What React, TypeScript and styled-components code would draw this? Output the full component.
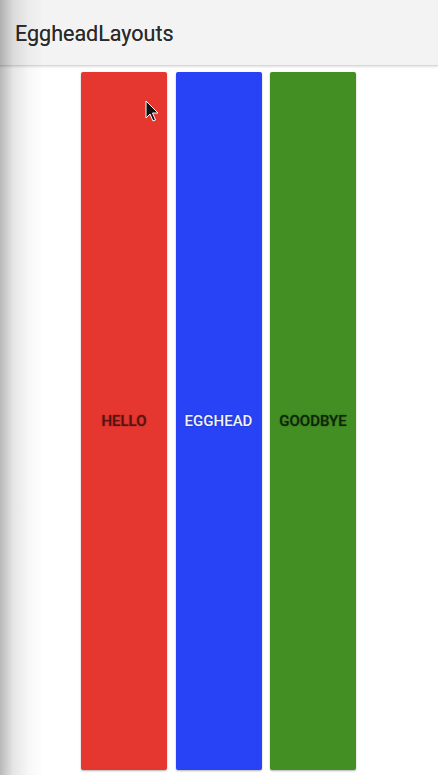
import React from "react";
import styled, { createGlobalStyle } from "styled-components";

const GlobalStyle = createGlobalStyle`
  html, body {
    margin: 0;
    padding: 0;
    background: #ffffff;
  }
  body {
    font-family: Roboto, "Liberation Sans", sans-serif;
  }
`;

const Screen = styled.div`
  position: relative;
  width: 438px;
  height: 775px;
  overflow: hidden;
  display: flex;
  flex-direction: column;
  background: #ffffff;
`;

const EdgeShade = styled.div`
  position: absolute;
  top: 0;
  left: 0;
  bottom: 0;
  width: 44px;
  pointer-events: none;
  background: linear-gradient(
    to right,
    rgba(0, 0, 0, 0.28),
    rgba(0, 0, 0, 0.1) 30%,
    rgba(0, 0, 0, 0.03) 65%,
    rgba(0, 0, 0, 0)
  );
  z-index: 5;
`;

const Toolbar = styled.header`
  height: 65px;
  flex-shrink: 0;
  display: flex;
  align-items: center;
  padding: 0 15px;
  background: #f3f3f3;
  border-bottom: 1px solid #d8d8d8;
  box-shadow: 0 1px 2px rgba(0, 0, 0, 0.12);
  z-index: 2;
`;

const Title = styled.h1`
  margin: 2px 0 0;
  font-size: 21.5px;
  font-weight: 400;
  color: #2a2a2a;
  text-shadow: 0 0 0.6px rgba(0, 0, 0, 0.6);
`;

const Row = styled.main`
  flex: 1;
  display: flex;
  gap: 8.5px;
  padding: 6px 0 5px 81px;
`;

const Bar = styled.button<{ $bg: string; $fg: string }>`
  width: 86px;
  border: none;
  border-radius: 2px;
  padding: 0;
  background: ${(p) => p.$bg};
  color: ${(p) => p.$fg};
  font-family: Roboto, "Liberation Sans", sans-serif;
  font-size: 15px;
  font-weight: 500;
  text-transform: uppercase;
  text-shadow: 0 0 1.5px rgba(0, 0, 0, 0.45);
  box-shadow: 0 1px 2px rgba(0, 0, 0, 0.3);
  display: flex;
  align-items: center;
  justify-content: center;
`;

const Cursor = styled.svg`
  position: absolute;
  left: 145px;
  top: 100px;
  z-index: 10;
`;

const buttons = [
  { label: "Hello", bg: "#e53730", fg: "#5a1210" },
  { label: "Egghead", bg: "#2743f5", fg: "#f2f2ff" },
  { label: "Goodbye", bg: "#438f24", fg: "#0f2608" },
];

export default function App() {
  return (
    <Screen>
      <GlobalStyle />
      <Toolbar>
        <Title>EggheadLayouts</Title>
      </Toolbar>
      <Row>
        {buttons.map((b) => (
          <Bar key={b.label} $bg={b.bg} $fg={b.fg}>
            {b.label}
          </Bar>
        ))}
      </Row>
      <EdgeShade />
      <Cursor width="14" height="24" viewBox="0 0 14 24">
        <path
          d="M1 1 L1 18 L5 14 L8 21 L10.5 20 L7.5 13 L13 13 Z"
          fill="#111"
          stroke="#fff"
          strokeWidth="1"
          strokeLinejoin="round"
        />
      </Cursor>
    </Screen>
  );
}
